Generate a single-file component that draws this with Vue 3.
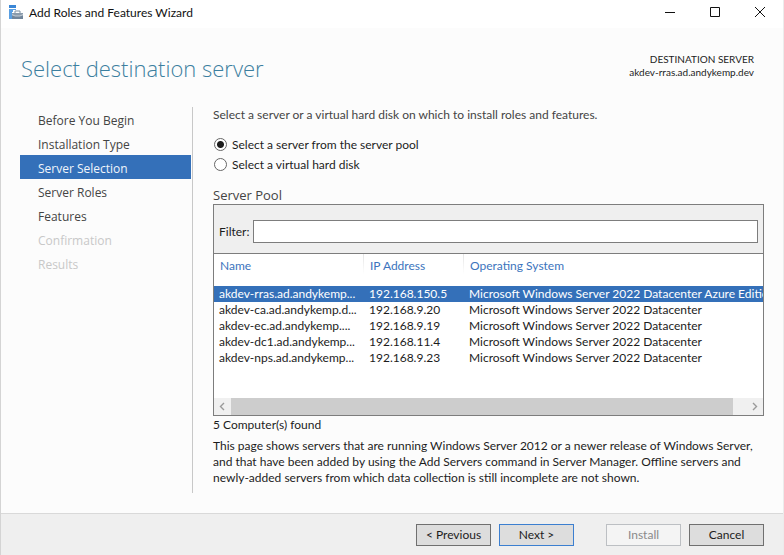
<script setup>
import { ref } from 'vue'

const steps = [
  { label: 'Before You Begin', state: 'open' },
  { label: 'Installation Type', state: 'open' },
  { label: 'Server Selection', state: 'current' },
  { label: 'Server Roles', state: 'open' },
  { label: 'Features', state: 'open' },
  { label: 'Confirmation', state: 'locked' },
  { label: 'Results', state: 'locked' },
]

const servers = [
  { name: 'akdev-rras.ad.andykemp...', ip: '192.168.150.5', os: 'Microsoft Windows Server 2022 Datacenter Azure Edition' },
  { name: 'akdev-ca.ad.andykemp.d...', ip: '192.168.9.20', os: 'Microsoft Windows Server 2022 Datacenter' },
  { name: 'akdev-ec.ad.andykemp....', ip: '192.168.9.19', os: 'Microsoft Windows Server 2022 Datacenter' },
  { name: 'akdev-dc1.ad.andykemp...', ip: '192.168.11.4', os: 'Microsoft Windows Server 2022 Datacenter' },
  { name: 'akdev-nps.ad.andykemp...', ip: '192.168.9.23', os: 'Microsoft Windows Server 2022 Datacenter' },
]

const source = ref('pool')
const filter = ref('')
const selected = ref(0)
</script>

<template>
  <div class="window">
    <header class="titlebar">
      <svg class="app-icon" width="16" height="16" viewBox="0 0 16 16" aria-hidden="true">
        <path d="M1 0h7v3H1z" fill="#3a86d6" />
        <path d="M1 4h7v1H5v2H4v7H1z" fill="#5a9fe2" />
        <path d="M7 8V6h5v2" fill="none" stroke="#7d8fa1" />
        <path d="M4 8h11v3H4z" fill="#8a9bac" />
        <path d="M4 11h11v3H4z" fill="#71859a" />
        <path d="M4 9.500l3 1.500h5l3-1.500" fill="none" stroke="#dfe5ea" stroke-width="0.700" />
      </svg>
      <span class="app-name">Add Roles and Features Wizard</span>
      <div class="window-buttons">
        <button type="button" aria-label="Minimize">
          <svg width="12" height="12" viewBox="0 0 12 12"><path d="M1 6.500h10" stroke="#111" fill="none" /></svg>
        </button>
        <button type="button" aria-label="Maximize">
          <svg width="12" height="12" viewBox="0 0 12 12"><path d="M1.500 1.500h9v9h-9z" stroke="#111" fill="none" /></svg>
        </button>
        <button type="button" aria-label="Close">
          <svg width="12" height="12" viewBox="0 0 12 12"><path d="M1 1l10 10M11 1L1 11" stroke="#111" fill="none" /></svg>
        </button>
      </div>
    </header>

    <div class="heading">
      <h1>Select destination server</h1>
      <div class="destination">
        <div>DESTINATION SERVER</div>
        <div>akdev-rras.ad.andykemp.dev</div>
      </div>
    </div>

    <div class="body">
      <nav class="steps">
        <button
          v-for="step in steps"
          :key="step.label"
          type="button"
          class="step"
          :class="step.state"
          :disabled="step.state === 'locked'"
        >{{ step.label }}</button>
      </nav>

      <main class="content">
        <p class="intro">Select a server or a virtual hard disk on which to install roles and features.</p>
        <div class="choices">
          <label class="choice"><input v-model="source" type="radio" name="source" value="pool" />Select a server from the server pool</label>
          <label class="choice"><input v-model="source" type="radio" name="source" value="disk" />Select a virtual hard disk</label>
        </div>

        <h2>Server Pool</h2>
        <section class="pool">
          <div class="filter">
            <label for="filter">Filter:</label>
            <input id="filter" v-model="filter" type="text" />
          </div>
          <div class="list">
            <table>
              <thead>
                <tr>
                  <th class="name">Name</th>
                  <th class="ip">IP Address</th>
                  <th>Operating System</th>
                </tr>
              </thead>
              <tbody>
                <tr
                  v-for="(server, i) in servers"
                  :key="server.name"
                  :class="{ selected: i === selected }"
                  @click="selected = i"
                >
                  <td>{{ server.name }}</td>
                  <td>{{ server.ip }}</td>
                  <td>{{ server.os }}</td>
                </tr>
              </tbody>
            </table>
          </div>
          <div class="scrollbar">
            <button type="button" aria-label="Scroll left">
              <svg width="7" height="9" viewBox="0 0 7 9"><path d="M5 1L1.500 4.500 5 8" stroke="#9a9a9a" stroke-width="1.400" fill="none" /></svg>
            </button>
            <div class="track"><div class="thumb"></div></div>
            <button type="button" aria-label="Scroll right">
              <svg width="7" height="9" viewBox="0 0 7 9"><path d="M2 1l3.500 3.500L2 8" stroke="#9a9a9a" stroke-width="1.400" fill="none" /></svg>
            </button>
          </div>
        </section>
        <p class="count">5 Computer(s) found</p>
        <p class="note">
          This page shows servers that are running Windows Server 2012 or a newer release of Windows Server,
          and that have been added by using the Add Servers command in Server Manager. Offline servers and
          newly-added servers from which data collection is still incomplete are not shown.
        </p>
      </main>
    </div>

    <footer class="footer">
      <button type="button" class="action">&lt; Previous</button>
      <button type="button" class="action primary">Next &gt;</button>
      <button type="button" class="action spaced" disabled>Install</button>
      <button type="button" class="action">Cancel</button>
    </footer>
  </div>
</template>

<style>
body {
  margin: 0;
}
</style>

<style scoped>
.window {
  box-sizing: border-box;
  display: flex;
  flex-direction: column;
  min-height: 100vh;
  border-left: 1px solid #d4d4d4;
  border-right: 1px solid #ececec;
  background: #fcfcfc;
  color: #1c1c1c;
  font-family: Lato, "Open Sans", sans-serif;
  font-size: 12px;
  line-height: 16px;
}
button,
input {
  font: inherit;
  color: inherit;
}
h1,
h2,
p {
  margin: 0;
  font-weight: 400;
}
.titlebar {
  display: flex;
  align-items: flex-start;
  height: 28px;
  padding: 0 1px 0 7px;
  background: #fff;
}
.app-icon {
  margin-top: 5px;
}
.app-name {
  margin: 5px auto 0 5px;
  color: #111;
}
.window-buttons {
  display: flex;
}
.window-buttons button {
  display: flex;
  align-items: center;
  justify-content: center;
  width: 45px;
  height: 24px;
  padding: 0;
  border: 0;
  background: none;
}
.heading {
  display: flex;
  justify-content: space-between;
  align-items: flex-start;
  padding: 24px 29px 0 20px;
}
h1 {
  color: #3c7f9f;
  font-family: "Open Sans", "Noto Sans", sans-serif;
  font-size: 22px;
  font-weight: 300;
  line-height: 32px;
}
.destination {
  padding-top: 1px;
  font-size: 10px;
  line-height: 13px;
  text-align: right;
}
.body {
  display: flex;
  flex: 1;
  padding: 23px 19px 20px;
}
.steps {
  flex: none;
  display: flex;
  flex-direction: column;
  width: 171px;
  padding-right: 1px;
  border-right: 1px solid #c8c8c8;
  font-family: "Open Sans", "Noto Sans", sans-serif;
}
.step {
  height: 24px;
  padding: 4px 18px 0;
  border: 0;
  background: none;
  color: #444;
  text-align: left;
}
.step.current {
  background: #3470b9;
  color: #f0f5fb;
}
.step.locked {
  color: #c8c8c8;
}
.content {
  flex: 1;
  min-width: 0;
  padding-left: 20px;
}
.intro {
  color: #444;
}
.choices {
  display: flex;
  flex-direction: column;
  gap: 4px;
  padding: 14px 0 14px 1px;
}
.choice {
  display: flex;
  align-items: center;
  gap: 5px;
}
.choice input {
  appearance: none;
  box-sizing: border-box;
  width: 13px;
  height: 13px;
  margin: 0 0 2px;
  border: 1px solid #666;
  border-radius: 50%;
  background: #fff;
}
.choice input:checked {
  background: radial-gradient(circle, #1c1c1c 3px, #fff 4px);
}
h2 {
  color: #444;
  font-family: "Open Sans", "Noto Sans", sans-serif;
  font-size: 13px;
  line-height: 17px;
}
.pool {
  border: 1px solid #7d7d7d;
  background: #fff;
}
.filter {
  display: flex;
  align-items: center;
  gap: 4px;
  padding: 15px 5px 10px;
  border-bottom: 1px solid #7d7d7d;
  background: #efefef;
}
.filter label {
  flex: none;
}
.filter input {
  box-sizing: border-box;
  flex: 1;
  min-width: 0;
  height: 23px;
  padding: 0 4px;
  border: 1px solid #7d7d7d;
  background: #fff;
}
.list {
  overflow: hidden;
  padding-bottom: 32px;
}
table {
  width: 100%;
  table-layout: fixed;
  border-collapse: collapse;
}
th,
td {
  padding: 0 0 0 5px;
  font-weight: 400;
  text-align: left;
  white-space: nowrap;
}
th {
  height: 24px;
  padding: 0 6px 8px;
  background: linear-gradient(#e4e4e4, #fff) right top / 1px 20px no-repeat;
  color: #3c74bd;
}
th:last-child {
  background: none;
}
.name {
  width: 138px;
}
.ip {
  width: 88px;
}
td {
  height: 16px;
  line-height: 16px;
}
.selected {
  background: #3470b9;
  color: #fff;
}
.scrollbar {
  display: flex;
  height: 17px;
  background: #f0f0f0;
}
.scrollbar button {
  display: flex;
  align-items: center;
  justify-content: center;
  width: 17px;
  padding: 0;
  border: 0;
  background: none;
}
.track {
  flex: 1;
}
.thumb {
  width: 97.5%;
  height: 100%;
  background: #cdcdcd;
}
.count {
  padding: 1px 0 5px;
}
.footer {
  display: flex;
  justify-content: flex-end;
  gap: 8px;
  padding: 10px 19px 9px;
  border-top: 1px solid #d9d9d9;
  background: #efefef;
}
.action {
  width: 75px;
  height: 22px;
  padding: 0;
  border: 1px solid #707070;
  background: #dddddd;
}
.action.primary {
  border-color: #3c7fd0;
}
.action.spaced {
  margin-left: 24px;
}
.action:disabled {
  border-color: #bcbfc3;
  background: #f4f4f4;
  color: #8a8a8a;
}
</style>
